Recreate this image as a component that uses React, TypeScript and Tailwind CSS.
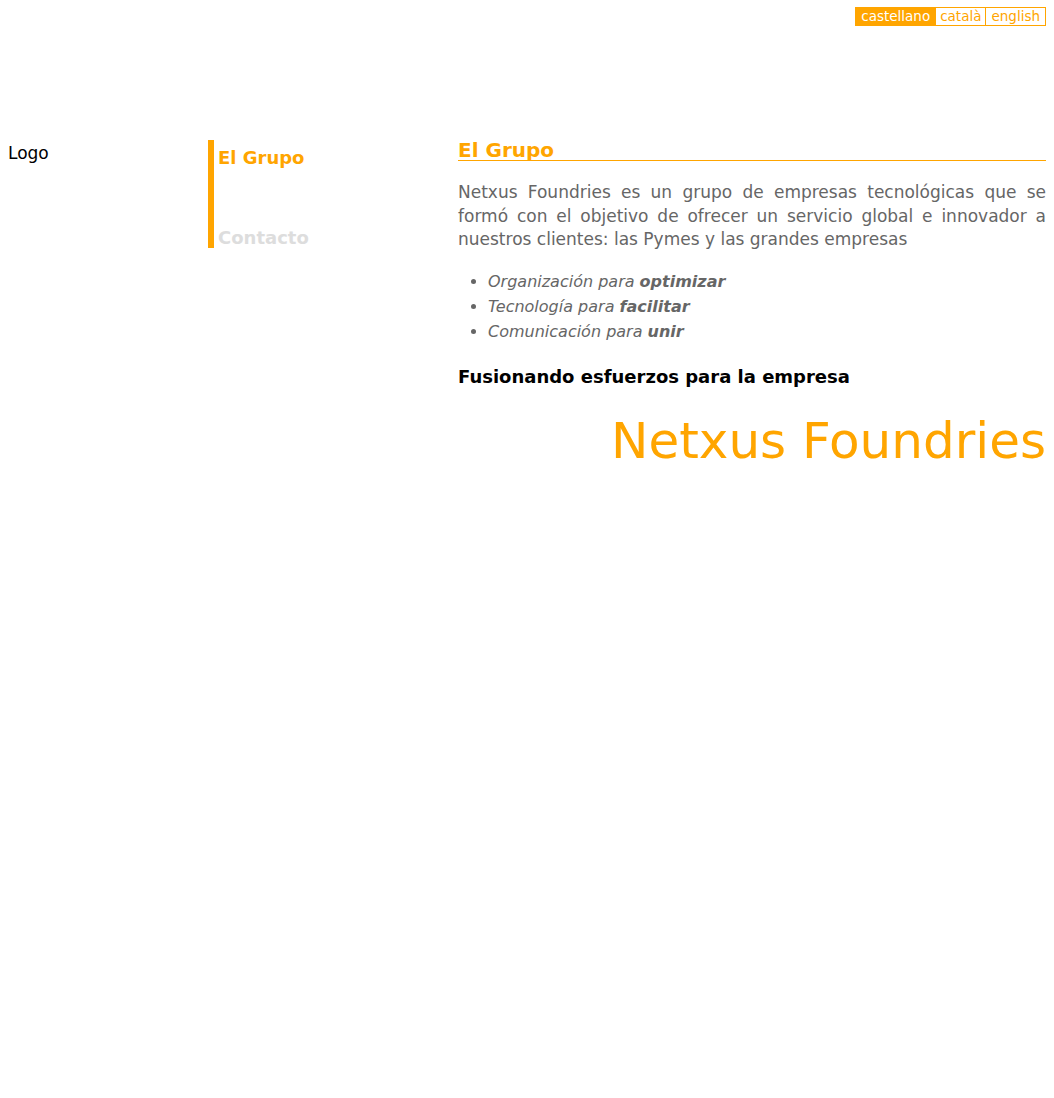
import React from 'react'

// Top language switcher
function LangBar() {
  return (
    <div className="flex justify-end pt-[7px]">
      <div className="flex text-[13.5px] leading-[17px]">
        <a className="bg-[#ffa500] text-white px-[5px] border border-[#ffa500]">castellano</a>
        <a className="bg-white text-[#ffa500] px-[4px] border border-[#ffa500] border-l-0">català</a>
        <a className="bg-white text-[#ffa500] px-[5px] border border-[#ffa500] border-l-0">english</a>
      </div>
    </div>
  )
}

export default function App() {
  return (
    <div className="min-h-screen bg-white px-2 font-['DejaVu_Sans',Verdana,sans-serif]">
      <LangBar />
      <div className="flex mt-[114px]">
        <div className="w-[200px] pt-[1px] text-[17px] text-black">Logo</div>
        <div className="w-[250px]">
          <ul className="border-l-[6px] border-[#ffa500] pl-[4px] h-[108px] flex flex-col justify-between font-bold text-[18px]">
            <li className="text-[#ffa500] pt-[4px]">El Grupo</li>
            <li className="text-[#dddddd] leading-[20px]">Contacto</li>
          </ul>
        </div>
        <div className="flex-1">
          <h1 className="text-[#ffa500] font-bold text-[20px] leading-[20px] border-b border-b-[#ffa500]">
            El Grupo
          </h1>
          <p className="mt-[20px] text-[#666666] text-[17px] leading-[23.5px] text-justify">
            Netxus Foundries es un grupo de empresas tecnológicas que se formó con el objetivo de ofrecer un
            servicio global e innovador a nuestros clientes: las Pymes y las grandes empresas
          </p>
          <ul className="mt-[17px] pl-[30px] list-disc text-[#666666] text-[16px] leading-[25px] italic">
            <li>Organización para <b>optimizar</b></li>
            <li>Tecnología para <b>facilitar</b></li>
            <li>Comunicación para <b>unir</b></li>
          </ul>
          <p className="mt-[21px] font-bold text-[18px] leading-[24px] text-black">Fusionando esfuerzos para la empresa</p>
          <p className="mt-[22px] text-right text-[50px] leading-[60px] text-[#ffa500]">Netxus Foundries</p>
        </div>
      </div>
    </div>
  )
}
